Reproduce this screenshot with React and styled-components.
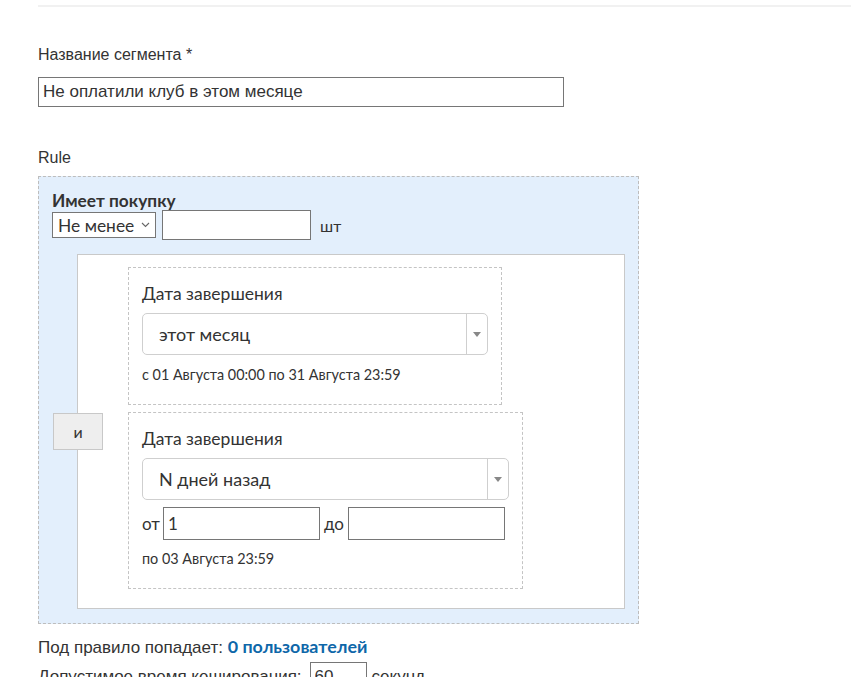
import React from "react";
import styled, { createGlobalStyle } from "styled-components";

const Global = createGlobalStyle`
  html, body { margin: 0; padding: 0; background: #fff; }
  body { font-family: "Liberation Sans", Arial, sans-serif; color: #333; }
  * { box-sizing: border-box; }
`;

const Page = styled.div`
  padding-left: 38px;
  padding-top: 5px;
`;

const TopRule = styled.div`
  height: 2px;
  background: #f1f1f1;
`;

const Form = styled.div`
  padding-top: 38px;
`;

const FieldLabel = styled.div`
  font-size: ${(p) => p.$fs || 16}px;
  line-height: 20px;
  color: #333;
  margin-top: ${(p) => p.$mt || 0}px;
  margin-bottom: ${(p) => p.$mb || 0}px;
`;

const TextInput = styled.input`
  display: block;
  width: ${(p) => p.$w}px;
  height: ${(p) => p.$h || 30}px;
  border: 1px solid #767676;
  padding: 0 4px;
  margin-left: ${(p) => p.$ml || 0}px;
  font-family: ${(p) => (p.$inner ? `Lato, "Open Sans", sans-serif` : `"Liberation Sans", Arial, sans-serif`)};
  font-size: ${(p) => p.$fs || 17}px;
  color: #333;
  background: #fff;
  outline: none;
  border-radius: 0;
`;

const RuleBox = styled.div`
  margin-top: 8px;
  width: 601px;
  background: #e3effc;
  border: 1px dashed #bdbdbd;
  padding: 15px 13px 14px 13px;
  font-family: Lato, "Open Sans", sans-serif;
`;

const RuleTitle = styled.div`
  font-weight: 700;
  font-size: 17.3px;
  line-height: 18px;
  color: #333;
`;

const CountRow = styled.div`
  display: flex;
  align-items: center;
  gap: 6px;
  margin-bottom: 14px;
`;

const SmallSelect = styled.div`
  width: 104px;
  height: 26px;
  border: 1px solid #767676;
  background: #fff;
  display: flex;
  align-items: center;
  justify-content: space-between;
  padding: 0 5px 0 5px;
  font-size: 17.4px;
  color: #333;
`;

const Unit = styled.span`
  font-size: 16px;
  margin-left: 3px;
  color: #333;
`;

const GroupBox = styled.div`
  margin-left: 25px;
  background: #fff;
  border: 1px solid #c9c9c9;
  display: flex;
  align-items: center;
  padding: 12px 0 12px 0;
`;

const AndButton = styled.div`
  margin-left: -25px;
  margin-right: 25px;
  width: 50px;
  height: 37px;
  flex-shrink: 0;
  background: #eeeeee;
  border: 1px solid #c8c8c8;
  display: flex;
  align-items: center;
  justify-content: center;
  font-size: 16px;
  color: #333;
`;

const Cards = styled.div`
  display: flex;
  flex-direction: column;
  gap: 7px;
  margin-bottom: 7px;
`;

const Card = styled.div`
  width: ${(p) => p.$w}px;
  height: ${(p) => p.$h}px;
  border: 1px dashed #c4c4c4;
  padding: 15px 13px 0 13px;
`;

const CardLabel = styled.div`
  font-size: 17.5px;
  line-height: 22px;
  color: #333;
  margin-bottom: 8px;
`;

const BigSelect = styled.div`
  height: 42px;
  border: 1px solid #cfcfcf;
  border-radius: 5px;
  background: #fff;
  display: flex;
  align-items: stretch;
`;

const BigSelectValue = styled.div`
  flex: 1;
  display: flex;
  align-items: center;
  padding-left: 16px;
  font-size: 18px;
  color: #333;
`;

const BigSelectArrow = styled.div`
  width: 21px;
  border-left: 1px solid #cfcfcf;
  display: flex;
  align-items: center;
  justify-content: center;
`;

const Hint = styled.div`
  font-size: 14.4px;
  line-height: 16px;
  color: #333;
  margin-top: ${(p) => p.$mt}px;
`;

const RangeRow = styled.div`
  display: flex;
  align-items: center;
  margin-top: 7px;
  font-size: 17px;
  color: #333;
`;

const RangeWord = styled.span`
  margin-right: ${(p) => p.$mr}px;
  margin-left: ${(p) => p.$ml || 0}px;
`;

const Footer = styled.div`
  margin-top: 12px;
  font-size: 17px;
  line-height: 20px;
  color: #333;
`;

const Strong = styled.span`
  font-family: Lato, "Open Sans", sans-serif;
  font-weight: 700;
  font-size: 17.9px;
  color: #0e67a9;
`;

const InlineRow = styled.div`
  display: flex;
  align-items: center;
  gap: 5px;
  margin-top: 4px;
  font-size: 17px;
  color: #333;
`;

const Chevron = () => (
  <svg width="9" height="6" viewBox="0 0 9 6">
    <path d="M1 1 L4.5 4.5 L8 1" fill="none" stroke="#666" strokeWidth="1.1" />
  </svg>
);

const Tri = () => (
  <svg width="8" height="5" viewBox="0 0 8 5">
    <path d="M0 0 H8 L4 5 Z" fill="#888" />
  </svg>
);

export default function App() {
  return (
    <>
      <Global />
      <Page>
        <TopRule />
        <Form>
          <FieldLabel $fs={16} $mb={12}>Название сегмента *</FieldLabel>
          <TextInput $w={526} defaultValue="Не оплатили клуб в этом месяце" />
          <FieldLabel $mt={41}>Rule</FieldLabel>
          <RuleBox>
            <RuleTitle>Имеет покупку</RuleTitle>
            <CountRow>
              <SmallSelect>
                <span>Не менее</span>
                <Chevron />
              </SmallSelect>
              <TextInput $w={149} $inner defaultValue="" />
              <Unit>шт</Unit>
            </CountRow>
            <GroupBox>
              <AndButton>и</AndButton>
              <Cards>
                <Card $w={374} $h={138}>
                  <CardLabel>Дата завершения</CardLabel>
                  <BigSelect>
                    <BigSelectValue>этот месяц</BigSelectValue>
                    <BigSelectArrow><Tri /></BigSelectArrow>
                  </BigSelect>
                  <Hint $mt={12}>с 01 Августа 00:00 по 31 Августа 23:59</Hint>
                </Card>
                <Card $w={395} $h={177}>
                  <CardLabel>Дата завершения</CardLabel>
                  <BigSelect>
                    <BigSelectValue>N дней назад</BigSelectValue>
                    <BigSelectArrow><Tri /></BigSelectArrow>
                  </BigSelect>
                  <RangeRow>
                    <RangeWord $mr={3}>от</RangeWord>
                    <TextInput $w={157} $h={33} $inner $fs={17} defaultValue="1" />
                    <RangeWord $ml={4} $mr={4}>до</RangeWord>
                    <TextInput $w={157} $h={33} $inner defaultValue="" />
                  </RangeRow>
                  <Hint $mt={11}>по 03 Августа 23:59</Hint>
                </Card>
              </Cards>
            </GroupBox>
          </RuleBox>
          <Footer>
            Под правило попадает: <Strong>0 пользователей</Strong>
          </Footer>
          <InlineRow>
            <span>Допустимое время кеширования:</span>
            <TextInput $w={57} $h={30} $ml={3} defaultValue="60" />
            <span>секунд</span>
          </InlineRow>
        </Form>
      </Page>
    </>
  );
}
